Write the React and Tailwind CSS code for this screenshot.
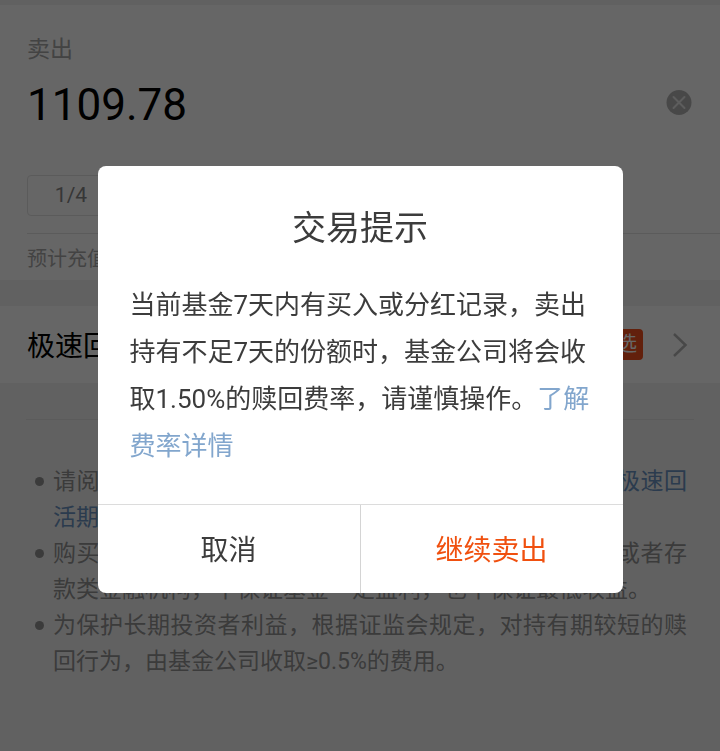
import { useState } from "react";

const fractions = ["1/4", "1/3", "1/2", "全部"];

const ClearIcon = () => (
  <svg width="26" height="26" viewBox="0 0 26 26" fill="none" aria-hidden="true">
    <circle cx="13" cy="12.5" r="12.5" fill="#b5b5b5" />
    <path d="M7.5 7l11 11M18.5 7l-11 11" stroke="#e8e8e8" strokeWidth="2" strokeLinecap="round" />
  </svg>
);

const ChevronIcon = () => (
  <svg width="16" height="26" viewBox="0 0 16 26" fill="none" aria-hidden="true">
    <path d="M2 2l11.5 11L2 24" stroke="#b5b5b5" strokeWidth="2.5" />
  </svg>
);

const Note = ({ children }) => (
  <li className="flex gap-[9px]">
    <span className="mt-[13px] h-[9px] w-[9px] shrink-0 rounded-full bg-[#949494]"></span>
    <p className="text-justify">{children}</p>
  </li>
);

const SellForm = () => {
  const [amount, setAmount] = useState("1109.78");

  return (
    <div className="min-h-screen bg-[#f3f3f3] pt-[5px]">
      <section className="bg-white pl-[27px]">
        <label htmlFor="amount" className="block pt-[29px] text-[23px] leading-8 text-[#a8a8a8]">卖出</label>
        <div className="flex items-center justify-between pr-7">
          <input
            id="amount"
            type="text"
            inputMode="decimal"
            value={amount}
            onChange={(e) => setAmount(e.target.value)}
            className="h-[74px] w-full min-w-0 flex-1 bg-transparent pt-1 text-[44px] text-black outline-none"
          />
          <button type="button" aria-label="清除" onClick={() => setAmount("")}>
            <ClearIcon />
          </button>
        </div>
        <div className="mt-[35px] flex gap-5 border-b border-[#e4e4e4] pb-[17px]">
          {fractions.map((item) => (
            <button key={item} type="button" className="h-[41px] w-[88px] rounded-sm border border-[#e4e4e4] pt-px text-[21px] text-[#888]">
              {item}
            </button>
          ))}
        </div>
        <p className="h-[46px] pt-[9px] text-[20px] leading-8 text-[#a8a8a8]">预计充值到账以实际确认为准</p>
      </section>

      <a href="#method" className="mt-[26px] flex h-[77px] items-center bg-white pl-[27px] pr-8 text-[28px] text-black">
        <span className="flex-1 pt-1">极速回活期</span>
        <span className="mr-[29px] rounded-sm bg-[#f4511e] px-[6px] text-[20px] leading-[31px] text-white">优选</span>
        <ChevronIcon />
      </a>

      <div className="mx-[26px] mt-9 border-t border-[#e4e4e4]"></div>

      <ul className="pb-10 pl-[35px] pr-[33px] pt-11 text-[23px] leading-9 text-[#949494]">
        <Note>
          请阅读基金合同、招募说明书等法律文件，并详细了解
          <a href="#rules" className="text-[#6b93c2]">极速回活期业务规则</a>
        </Note>
        <Note>购买货币市场基金并不等于将资金作为存款存放在银行或者存款类金融机构，不保证基金一定盈利，也不保证最低收益。</Note>
        <Note>为保护长期投资者利益，根据证监会规定，对持有期较短的赎回行为，由基金公司收取≥0.5%的费用。</Note>
      </ul>
    </div>
  );
};

const TradeDialog = () => (
  <div className="fixed inset-0 flex items-center justify-center bg-black/60 px-6 pt-2">
    <div role="dialog" aria-modal="true" aria-labelledby="dialog-title" className="w-full max-w-[525px] overflow-hidden rounded-lg bg-white text-[#3c3c3c]">
      <h2 id="dialog-title" className="pt-[37px] text-center text-[34px] leading-[50px]">交易提示</h2>
      <p className="px-8 pb-[34px] pt-[29px] text-[26px] leading-[47px]">
        当前基金7天内有买入或分红记录，卖出持有不足7天的份额时，基金公司将会收取1.50%的赎回费率，请谨慎操作。
        <a href="#fees" className="text-[#82a6cd]">了解费率详情</a>
      </p>
      <div className="flex h-[89px] divide-x divide-[#d4d4d4] border-t border-[#dcdcdc] text-[28px]">
        <button type="button" className="flex-1 pt-1">取消</button>
        <button type="button" className="flex-1 pt-1 text-[#f0500f]">继续卖出</button>
      </div>
    </div>
  </div>
);

const App = () => {
  return (
    <main className="font-['Roboto','Noto_Sans_CJK_SC',sans-serif]">
      <SellForm />
      <TradeDialog />
    </main>
  );
};

export default App;
